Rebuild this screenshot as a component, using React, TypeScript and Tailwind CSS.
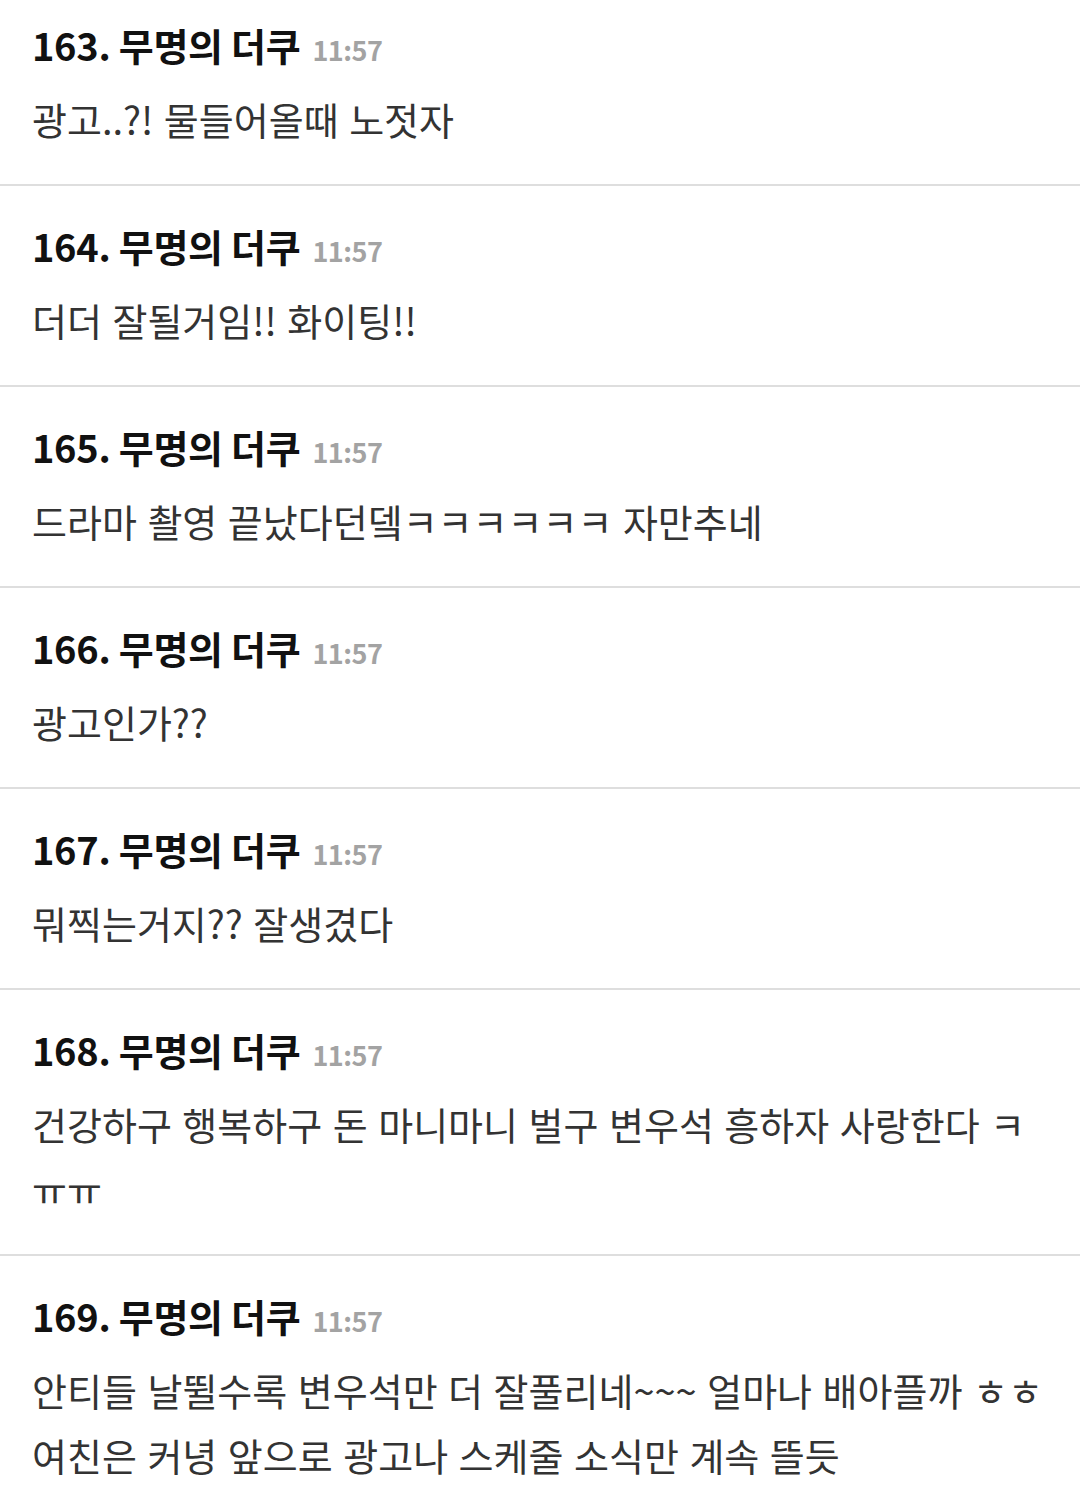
const comments = [
  { no: 163, name: "무명의 더쿠", time: "11:57", lines: ["광고..?! 물들어올때 노젓자"] },
  { no: 164, name: "무명의 더쿠", time: "11:57", lines: ["더더 잘될거임!! 화이팅!!"] },
  { no: 165, name: "무명의 더쿠", time: "11:57", lines: ["드라마 촬영 끝났다던뎈ㅋㅋㅋㅋㅋㅋ 자만추네"] },
  { no: 166, name: "무명의 더쿠", time: "11:57", lines: ["광고인가??"] },
  { no: 167, name: "무명의 더쿠", time: "11:57", lines: ["뭐찍는거지?? 잘생겼다"] },
  { no: 168, name: "무명의 더쿠", time: "11:57", lines: ["건강하구 행복하구 돈 마니마니 벌구 변우석 흥하자 사랑한다 ㅋ", "ㅠㅠ"] },
  {
    no: 169,
    name: "무명의 더쿠",
    time: "11:57",
    lines: ["안티들 날뛸수록 변우석만 더 잘풀리네~~~ 얼마나 배아플까 ㅎㅎ", "여친은 커녕 앞으로 광고나 스케줄 소식만 계속 뜰듯"],
  },
];

export default function App() {
  return (
    <div
      className="w-[1080px] h-[1493px] overflow-hidden bg-white"
      style={{ fontFamily: '"Noto Sans CJK KR", "Noto Sans", sans-serif' }}
    >
      <div className="-mt-[15px]">
        {comments.map((c) => (
          <div key={c.no} className="pl-8 pr-2 pt-[33px] pb-[33px] border-b-2 border-[#dedede]">
            <div className="flex items-baseline h-[54px] leading-[54px]">
              <span className="text-[38px] font-bold text-[#111] tracking-[-0.3px]">
                {c.no}. {c.name}
              </span>
              <span className="ml-3 text-[27px] font-bold text-[#a3a3a3] tracking-[-0.5px]">{c.time}</span>
            </div>
            <div className="mt-[14px] text-[38px] leading-[65px] text-[#333] whitespace-nowrap [word-spacing:2px]">
              {c.lines.map((l, i) => (
                <div key={i}>{l}</div>
              ))}
            </div>
          </div>
        ))}
      </div>
    </div>
  );
}
